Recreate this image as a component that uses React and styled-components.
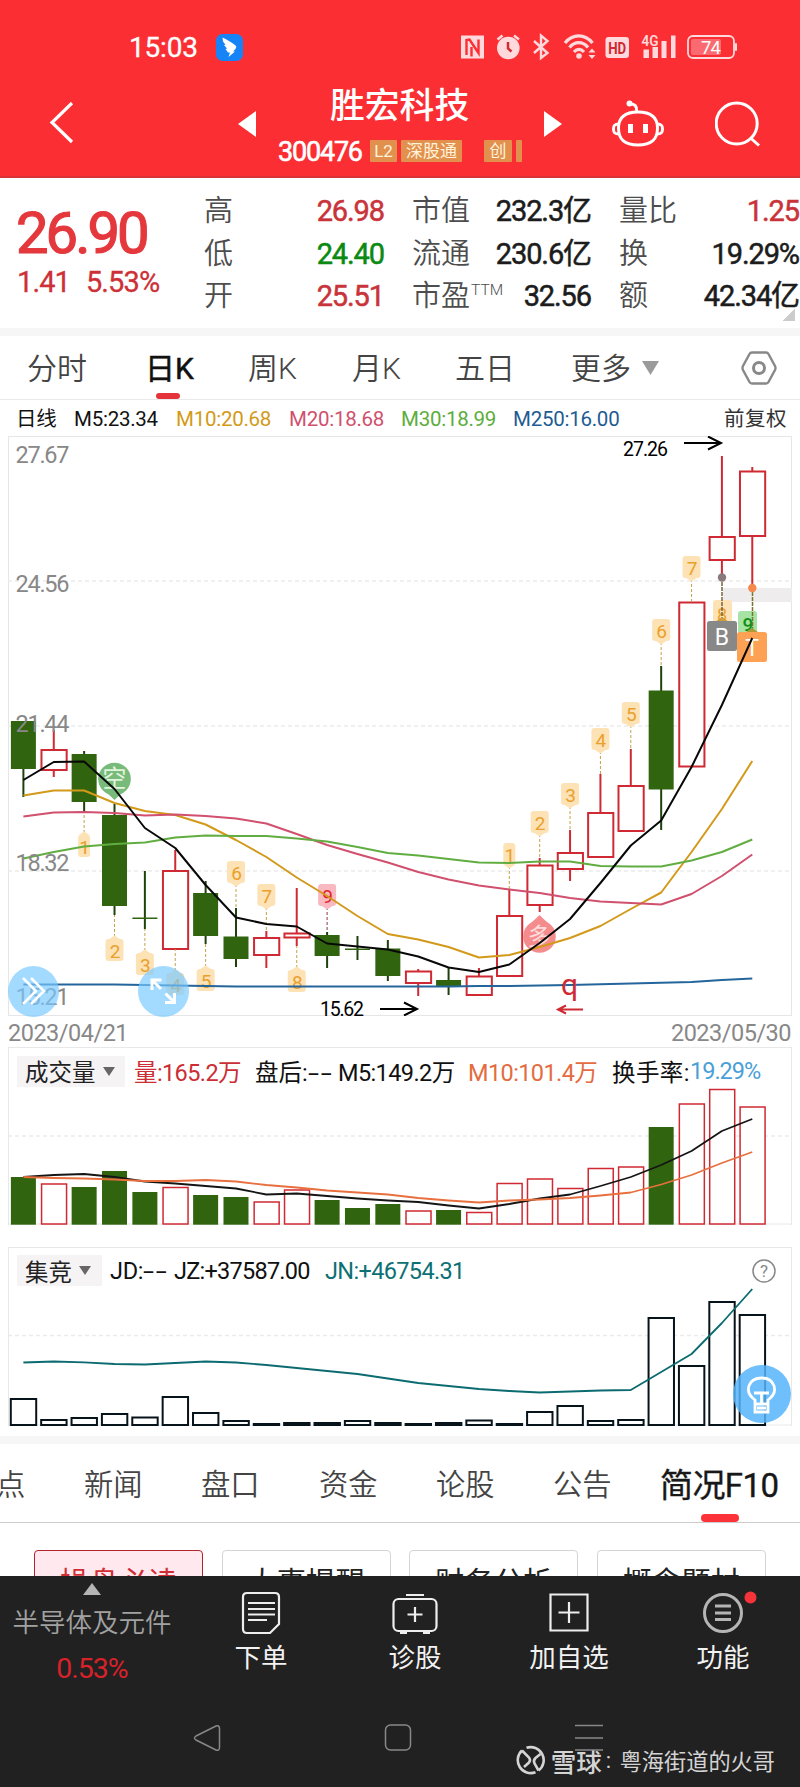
import React from 'react';
import styled, { createGlobalStyle } from 'styled-components';

const GlobalStyle = createGlobalStyle`
  * { box-sizing: border-box; }
  body {
    margin: 0;
    background: #fff;
    font-family: Roboto, "Noto Sans CJK SC", sans-serif;
  }
  svg { display: block; }
`;

/* styled components start */

const Page = styled.div`
  display: flex;
  flex-direction: column;
  width: 800px;
  height: 1787px;
  overflow: hidden;
  background: #fff;
  white-space: nowrap;
`;

const Header = styled.header`
  height: 178px;
  background: #fb2e34;
  border-bottom: 2px solid #d93338;
  color: #fff;
`;

const StatusBar = styled.div`
  display: flex;
  align-items: center;
  justify-content: space-between;
  height: 94px;
  padding: 0 62px 0 129px;
`;

const Clock = styled.div`
  display: flex;
  align-items: center;
  gap: 18px;
  font-size: 28px;
  letter-spacing: -0.2px;
  -webkit-text-stroke: 0.3px #fff;
`;

const TitleBar = styled.div`
  display: grid;
  grid-template-columns: 238px 40px 266px 68px 103px 60px;
  height: 82px;
`;

const TitleIcon = styled.div`
  padding: ${props => props.pad};
`;

const Title = styled.div`
  display: flex;
  flex-direction: column;
`;

const StockName = styled.div`
  height: 42px;
  padding-left: 52px;
  font-size: 34.8px;
  line-height: 25px;
  font-weight: 500;
`;

const CodeRow = styled.div`
  display: flex;
  height: 24px;
  margin-top: 3px;
`;

const Code = styled.span`
  width: 92px;
  font-size: 27px;
  line-height: 27px;
  letter-spacing: -1.2px;
  -webkit-text-stroke: 0.6px #fff;
`;

const Badge = styled.span`
  width: ${props => props.w}px;
  height: 22px;
  margin: 1px ${props => props.gap}px 0 0;
  background: #e2904d;
  border-radius: 1px;
  color: #fff3dc;
  font-size: 17px;
  line-height: 23px;
  text-align: center;
`;

const Quote = styled.section`
  display: flex;
  height: 150px;
  color: #222;
`;

const PriceBox = styled.div`
  width: 205px;
  padding: 22px 0 0 16px;
  color: #e4383d;
`;

const Price = styled.div`
  font-size: 58px;
  line-height: 67px;
  letter-spacing: -3px;
  -webkit-text-stroke: 1.2px #e4383d;
`;

const Change = styled.div`
  display: flex;
  gap: 16px;
  padding-left: 1px;
  font-size: 29px;
  line-height: 33px;
  margin-top: -1px;
  letter-spacing: -0.9px;
  color: #cd3036;
  -webkit-text-stroke: 0.3px #cd3036;
`;

const Stats = styled.div`
  display: grid;
  grid-template-columns: 180px 179px 180px;
  grid-template-rows: repeat(3, 42.5px);
  column-gap: 28px;
  padding-top: 12px;
`;

const Stat = styled.div`
  display: flex;
  justify-content: space-between;
  line-height: 43px;
`;

const StatLabel = styled.span`
  margin-left: -1px;
  font-size: 29px;
  font-weight: 350;
  color: #4d4d4d;

  sup {
    font-size: 15.5px;
    vertical-align: 11px;
    line-height: 0;
    margin-left: 1px;
  }
`;

const StatValue = styled.span`
  font-size: 29px;
  letter-spacing: -1.1px;
  margin-right: 1px;
  color: ${props => props.color || '#1c1c1c'};
  -webkit-text-stroke: 0.5px ${props => props.color || '#1c1c1c'};
`;

const CornerMark = styled.div`
  flex: none;
  width: 13px;
  height: 12px;
  margin: 131px 0 0 -18px;
  background: linear-gradient(to bottom right, transparent 50%, #ccc 50%);
`;

const Divider = styled.div`
  height: 8px;
  background: #f6f6f6;
`;

const PeriodTabs = styled.nav`
  display: grid;
  grid-template-columns: 118px 103px 104px 103px 116px 70px 99px 60px;
  height: 64px;
  padding-left: 27px;
  border-bottom: 1px solid #e9e9e9;
`;

const PeriodTab = styled.div`
  display: flex;
  flex-direction: column;
  justify-content: space-between;
  font-size: 30px;
  line-height: 65px;
  height: 63px;
  font-weight: ${props => (props.active ? 400 : 350)};
  color: ${props => (props.active ? '#111' : '#444')};
  -webkit-text-stroke: ${props => (props.active ? '0.5px #111' : '0')};

  &::after {
    content: '';
    flex: none;
    display: ${props => (props.active ? 'block' : 'none')};
    width: 24px;
    height: 6px;
    margin: -8px 0 0 11px;
    border-radius: 3px;
    background: #e4333a;
  }
`;

const Averages = styled.div`
  display: grid;
  grid-template-columns: 58px 102px 113px 112px 112px 211px 70px;
  height: 36px;
  padding-left: 16px;
  font-size: 20.5px;
  line-height: 38px;
  letter-spacing: -0.25px;
`;

const Tint = styled.span`
  color: ${props => props.color || '#111'};
  letter-spacing: ${props => props.ls}px;
`;

/* double hyphen shown for an empty value */
const Dashes = styled.span`
  display: inline-block;
  letter-spacing: 1px;
  transform: scaleX(1.7);
  transform-origin: left;
`;

const ChartArea = styled.div`
  position: relative;
  height: 580px;
`;

const FloatButton = styled.div`
  position: absolute;
  left: ${props => props.x}px;
  top: ${props => props.y}px;
  width: ${props => props.size}px;
  height: ${props => props.size}px;
  border-radius: 50%;
  background: ${props => props.bg};
`;

const Dates = styled.div`
  display: flex;
  justify-content: space-between;
  height: 31px;
  padding: 0 9px 0 8px;
  font-size: 23.5px;
  line-height: 34px;
  letter-spacing: -0.5px;
  color: #888;
`;

const Panel = styled.section`
  position: relative;
  height: ${props => props.h}px;
  margin: 0 8px ${props => props.gap}px;
  border: 1px solid #e8e8e8;
  border-width: 1px 1px 0 1px;
`;

const PanelHead = styled.div`
  display: grid;
  grid-template-columns: ${props => props.cols};
  align-items: center;
  height: 39px;
  padding: 6px 0 0 8px;
  font-size: 23.5px;
`;

const Picker = styled.div`
  display: flex;
  align-items: center;
  gap: 7px;
  width: ${props => props.w}px;
  height: 31px;
  padding-left: 8px;
  background: #f6f3f5;
  color: #222;

  &::after {
    content: '';
    border: 6.5px solid transparent;
    border-top: 9px solid #666;
    border-bottom: 0;
  }
`;

const NewsTabs = styled.nav`
  display: grid;
  grid-template-columns: 88px 117px 118px 117px 117px 107px 130px;
  height: 79px;
  margin-left: -4px;
  border-bottom: 1px solid #ccc;
`;

const NewsTab = styled.div`
  font-size: ${props => (props.active ? 33 : 29.3)}px;
  font-weight: ${props => (props.active ? 400 : 350)};
  color: ${props => (props.active ? '#181818' : '#444')};
  line-height: 83px;
  letter-spacing: ${props => (props.active ? -0.6 : 0)}px;
  -webkit-text-stroke: ${props => (props.active ? '0.4px #181818' : '0')};

  &::after {
    content: '';
    display: ${props => (props.active ? 'block' : 'none')};
    width: 38px;
    height: 8px;
    margin: -13px 0 0 41px;
    border-radius: 4px;
    background: #fb3338;
  }
`;

const Topics = styled.div`
  display: grid;
  grid-template-columns: repeat(4, 169px);
  gap: 18.6px;
  height: 53px;
  padding: 27px 0 0 34px;
  overflow: hidden;
`;

const Topic = styled.div`
  height: 66px;
  border: 1.5px solid ${props => (props.active ? '#b3232b' : '#d4d4d4')};
  border-radius: 4px;
  background: ${props => (props.active ? '#ffe9ee' : '#fff')};
  color: ${props => (props.active ? '#d22d35' : '#222')};
  font-size: 29.3px;
  line-height: 65px;
  text-align: center;
`;

const BottomBar = styled.footer`
  position: relative;
  height: 211px;
  background: #212121;
  color: #f2f2f2;
`;

const Actions = styled.div`
  display: grid;
  grid-template-columns: 184px repeat(4, 154px);
  height: 120px;
`;

const Sector = styled.div`
  display: flex;
  flex-direction: column;
  align-items: center;
  padding-top: 7px;
  font-size: 26.5px;
  font-weight: 350;
  line-height: 36px;
  color: #a2a2a2;

  &::before {
    content: '';
    border: 9.5px solid transparent;
    border-bottom: 12px solid #b5b5b5;
    border-top: 0;
    margin-bottom: 10px;
  }
`;

const SectorChange = styled.div`
  margin-top: 10px;
  font-size: 28.5px;
  font-weight: 400;
  letter-spacing: -1px;
  color: #d8222a;
`;

const Action = styled.div`
  display: flex;
  flex-direction: column;
  align-items: center;
  padding-top: 13px;
  font-size: 26.5px;
  line-height: 46px;
`;

const SystemNav = styled.div`
  display: flex;
  padding: 28px 0 0 193px;
  gap: 163px;
`;

const Watermark = styled.div`
  position: absolute;
  right: 25px;
  top: 168px;
  display: flex;
  align-items: center;
  height: 32px;
  color: #d4d4d4;
  font-size: 22.2px;
`;

const Brand = styled.span`
  margin: 0 0 0 5px;
  font-size: 25.5px;
  font-weight: 500;
`;

const Colon = styled.span`
  width: 18px;
  padding-left: 4px;
`;

/* styled components end */

/* chart data, one entry for each trading day, y in page pixels */

const RED = '#cf2a33';
const GREEN = '#30640f';
const dayX = i => 23.4 + i * 30.37;

// [up, top, bottom, wick top, wick bottom]
const candles = [
  [0, 721, 769, 721, 797], [1, 750, 770, 730, 777], [0, 754, 802, 751, 812],
  [0, 815, 906, 804, 915], [0, 917.5, 919, 871, 929], [1, 871, 949, 850, 949],
  [0, 893, 936, 881, 944], [0, 936.5, 959, 908, 967], [1, 938, 955, 931, 968],
  [1, 933.5, 937.5, 888, 946], [0, 935, 956, 932, 968], [0, 948.5, 950, 936, 960],
  [0, 948.5, 976, 940, 981], [1, 971.5, 983, 969, 996], [0, 980, 986, 967, 995],
  [1, 976.5, 995, 968, 995], [1, 916, 976, 890, 976], [1, 865.5, 905, 858, 912],
  [1, 853, 869, 830, 881], [1, 813, 857, 774, 857], [1, 786, 831, 749, 831],
  [0, 690.5, 789.5, 666, 830], [1, 602.5, 766.5, 602, 766], [1, 537, 560, 456, 577],
  [1, 471.5, 536, 467, 588],
];

const averages = [
  { color: '#d3991a', ys: [795.5, 790.5, 790.5, 803, 811, 815, 824.5, 840, 857, 877.5, 896, 916, 934, 939.5, 947, 957.5, 955, 947, 938, 926, 909, 892.5, 852, 809, 761] },
  { color: '#d0506e', ys: [816.5, 812.5, 812, 813, 815.5, 814.5, 816, 818.5, 823.5, 834, 845, 854, 862.5, 872, 879.5, 885.5, 889.5, 893, 898, 901.5, 903, 904.5, 894, 876, 854.5] },
  { color: '#61ad42', ys: [858.5, 852, 846.5, 844, 842.5, 837.5, 835.5, 836, 836, 838.5, 841.5, 847, 853, 855.5, 859, 862.5, 863, 861.5, 861.5, 866, 866.5, 866.5, 860.5, 852, 839.5] },
  { color: '#24659b', ys: [984.5, 984.5, 984.5, 984.5, 985, 985.5, 986, 986.5, 986.5, 986.5, 986.5, 986.5, 986.5, 986.5, 986.5, 986, 986, 985.5, 985, 984.3, 983.5, 982.8, 982, 980, 978.5] },
  { color: '#080808', ys: [780, 762, 761.5, 789, 828, 848, 885, 917.5, 924, 926.5, 943.5, 946.5, 949.5, 956.5, 967.5, 972, 964.5, 943, 919, 883, 845.5, 820.5, 767, 705, 638] },
];

// [day, digit, tag top, far end of the dotted line]
const marks = [
  [2, 1, 833, 812], [3, 2, 937, 915], [4, 3, 951, 929], [5, 4, 971, 949],
  [6, 5, 967, 944], [7, 6, 861, 908], [8, 7, 884, 931], [9, 8, 968, 946],
  [10, 9, 884, 932], [16, 1, 843, 890], [17, 2, 811, 858], [18, 3, 783, 830],
  [19, 4, 728, 774], [20, 5, 702, 749], [21, 6, 619, 666], [22, 7, 556, 602],
];

const volumes = [
  [0, 1177], [1, 1184], [0, 1187], [0, 1171], [0, 1192], [1, 1187.5], [0, 1195],
  [0, 1197], [1, 1202], [1, 1190], [0, 1200], [0, 1208], [0, 1204], [1, 1211],
  [0, 1210], [1, 1212.5], [1, 1183.5], [1, 1179], [1, 1188.5], [1, 1168.5],
  [1, 1167], [0, 1127], [1, 1104], [1, 1089.5], [1, 1107],
];
const volumeM5 = [1177, 1175, 1174, 1177, 1181.5, 1183.5, 1186, 1188.5, 1194.5, 1193.5, 1196, 1198.5, 1200.5, 1202, 1205.5, 1208.5, 1204, 1198.5, 1194.5, 1186, 1177, 1165, 1151, 1131, 1119];
const volumeM10 = [1177, 1178, 1178.5, 1179.5, 1181, 1181, 1180, 1181.5, 1185, 1187.5, 1190.5, 1192.5, 1194.5, 1198, 1200.5, 1202.5, 1200.5, 1199.5, 1198, 1195.5, 1192.5, 1184.5, 1175, 1163, 1152];

const auctions = [1399, 1420, 1418, 1414, 1417.5, 1397, 1413, 1421, 1424, 1423, 1423, 1421, 1423, 1424, 1423, 1420.5, 1424, 1412, 1406, 1421, 1420, 1318, 1366, 1302, 1315];
const auctionLine = [1362.5, 1361.5, 1362.3, 1364, 1364.5, 1363, 1361.5, 1362.5, 1365, 1368, 1371, 1374, 1378.5, 1383, 1386, 1389, 1391, 1392.5, 1391.5, 1390.5, 1390, 1372, 1354, 1323, 1289];

const Line = ({ ys, color, width = 2 }) => (
  <polyline
    points={ys.map((y, i) => `${dayX(i)},${y}`).join(' ')}
    fill="none" stroke={color} strokeWidth={width} strokeLinejoin="round" />
);

const Grid = ({ ys }) => ys.map(y => (
  <line key={y} x1="8" x2="792" y1={y} y2={y} stroke="#ebebeb" strokeWidth="1.5" strokeDasharray="4 3" />
));

const Candle = ({ day, up, top, bottom, high, low }) => {
  const x = dayX(day);
  const stroke = up ? RED : '#1d420c';
  return (
    <g>
      <line x1={x} x2={x} y1={high} y2={low} stroke={stroke} strokeWidth="2" />
      {up
        ? <rect x={x - 12.3} y={top} width="25.2" height={bottom - top} fill="#fff" stroke={RED} strokeWidth="2" />
        : <rect x={x - 12.5} y={top} width="25" height={bottom - top} fill={GREEN} />}
    </g>
  );
};

const Mark = ({ day, digit, top, far }) => {
  const x = dayX(day);
  const below = far < top;
  const nine = digit === 9;
  const w = digit === 1 ? 6 : 9;
  return (
    <g>
      <line x1={x} x2={x} y1={below ? top : top + 23} y2={far} stroke={nine ? '#8b3a44' : '#c4a24a'} strokeDasharray="3 2" />
      <rect x={x - w} y={top + (below ? 2 : 0)} width={w * 2} height="22" rx="3" fill={nine ? '#f9b9c0' : '#fde2b6'} />
      <path
        d={below ? `M${x - 6} ${top + 2.5}L${x} ${top - 1.5}L${x + 6} ${top + 2.5}Z` : `M${x - 6} ${top + 21.5}L${x} ${top + 25.5}L${x + 6} ${top + 21.5}Z`}
        fill={nine ? '#f9b9c0' : '#fde2b6'} />
      <text x={x + 0.5} y={top + (below ? 21 : 19)} textAnchor="middle" fontSize="19" fill={nine ? '#e0202c' : '#eaa02c'}>{digit}</text>
    </g>
  );
};

const AxisLabel = ({ y, children }) => (
  <text x="15.5" y={y} fontSize="23.5" fill="#888" textLength="54">{children}</text>
);

const Arrow = ({ from, to, y, color = '#000', head = 13 }) => {
  const d = to > from ? -head : head;
  return (
    <path d={`M${from} ${y}H${to}M${to + d} ${y - head / 2}L${to} ${y}L${to + d} ${y + head / 2}`} fill="none" stroke={color} strokeWidth="2" />
  );
};

const PriceChart = () => (
  <svg width="800" height="580" viewBox="0 436 800 580">
    <rect x="8.5" y="436.5" width="783" height="579" fill="none" stroke="#e6e6e6" />
    <Grid ys={[581, 726, 871]} />
    <rect x="723" y="588" width="69" height="14" fill="#efecee" />
    {candles.map(([up, top, bottom, high, low], i) => (
      <Candle key={i} day={i} up={up} top={top} bottom={bottom} high={high} low={low} />
    ))}
    {marks.map(([day, digit, top, far]) => (
      <Mark key={day} day={day} digit={digit} top={top} far={far} />
    ))}

    {/* buy and trade flags on the last two days */}
    <rect x="713" y="600" width="19" height="24" rx="3" fill="#fde2b6" />
    <text x="722" y="621" textAnchor="middle" fontSize="18" fill="#eaa02c">8</text>
    <path d="M722 582V620" stroke="#77663c" strokeWidth="1.5" strokeDasharray="4 1" />
    <path d="M715 622L722 617L729 622Z" fill="#d09b39" />
    <circle cx="722" cy="577.5" r="4.2" fill="#8a7a7c" />
    <rect x="738" y="611" width="19" height="23" rx="3" fill="#a6e3a4" />
    <text x="748" y="631" textAnchor="middle" fontSize="19" fontWeight="500" fill="#109016">9</text>
    <path d="M752.5 592V630" stroke="#77762c" strokeWidth="1.5" strokeDasharray="4 1" />
    <path d="M746 632L752 628L758 632Z" fill="#b09a33" />
    <circle cx="752.3" cy="588" r="4.2" fill="#f5894c" />
    <rect x="707" y="621" width="30" height="30" rx="2.5" fill="#888" />
    <text x="722" y="645" textAnchor="middle" fontSize="23" fill="#fff">B</text>
    <rect x="737" y="632" width="30" height="30" rx="2.5" fill="#fda254" />
    <text x="752" y="656" textAnchor="middle" fontSize="23" fill="#fff">T</text>

    <path d="M104 790L114.5 800L125 790Z" fill="#77ba79" />
    <circle cx="114.5" cy="779" r="16.3" fill="#77ba79" />
    <text x="114.5" y="787" textAnchor="middle" fontSize="24" fill="#e0f4dd">空</text>
    <path d="M529 925L539.5 915L550 925Z" fill="#f48c8e" />
    <circle cx="539.5" cy="936.5" r="16.3" fill="#f48c8e" />
    <text x="539.5" y="945" textAnchor="middle" fontSize="24" fill="#ffdcda">多</text>

    {averages.map(line => <Line key={line.color} {...line} />)}

    <AxisLabel y={463}>27.67</AxisLabel>
    <AxisLabel y={592}>24.56</AxisLabel>
    <AxisLabel y={731.5}>21.44</AxisLabel>
    <AxisLabel y={871}>18.32</AxisLabel>
    <AxisLabel y={1005}>15.21</AxisLabel>

    <text x="623" y="456" fontSize="19.5" textLength="45">27.26</text>
    <Arrow from={684} to={721} y={443} />
    <text x="320" y="1016" fontSize="19.5" textLength="44">15.62</text>
    <Arrow from={380} to={417} y={1009} />
    <text x="569.5" y="995" textAnchor="middle" fontSize="30" fill={RED}>q</text>
    <Arrow from={583} to={558} y={1009.5} color={RED} head={8} />
  </svg>
);

const VolumeChart = () => (
  <svg width="782" height="138" viewBox="9 1087 782 138">
    <Grid ys={[1136]} />
    <path d="M9 1224H791" stroke="#e8e8e8" />
    {volumes.map(([up, top], i) => (up
      ? <rect key={i} x={dayX(i) - 12.2} y={top} width="25" height={1224 - top} fill="#fff" stroke={RED} strokeWidth="1.5" />
      : <rect key={i} x={dayX(i) - 12.5} y={top} width="25" height={1224.7 - top} fill={GREEN} />
    ))}
    <Line ys={volumeM5} color="#151515" width={1.8} />
    <Line ys={volumeM10} color="#e86f3e" width={1.8} />
  </svg>
);

const AuctionChart = () => (
  <svg width="782" height="139" viewBox="9 1287 782 139">
    <Grid ys={[1335.5]} />
    <path d="M9 1425H791" stroke="#e8e8e8" />
    {auctions.map((top, i) => (
      <rect key={i} x={dayX(i) - 12.6} y={top} width="25.4" height={1425 - top} fill="#fff" stroke="#07131a" strokeWidth="2" />
    ))}
    <Line ys={auctionLine} color="#0b6b70" width={1.8} />
  </svg>
);

const StatusIcons = () => (
  <svg width="277" height="30" viewBox="461 32 277 30" fill="#ffd9dc">
    {/* nfc */}
    <path d="M461 35.5H484V58.5H461Z" />
    <path d="M466.5 55V40L469.5 39.5L478.5 53V39.5M466.5 40V55M471.5 47V56.5" fill="none" stroke="#fb2e34" strokeWidth="2.4" />
    {/* alarm */}
    <circle cx="508.3" cy="48" r="11.3" />
    <path d="M497.5 39.5L502.5 35.5M519 39.5L514 35.5" stroke="#ffd9dc" strokeWidth="2.6" />
    <path d="M508 42V48.5L511.5 51.5" fill="none" stroke="#d22c33" strokeWidth="2.5" />
    {/* bluetooth */}
    <path d="M534 41L547.5 53L541 58V35.5L547.5 41L534 53" fill="none" stroke="#ffd9dc" strokeWidth="2.4" />
    {/* wifi */}
    <path d="M565 43C572.5 33.5 585 33.5 592.5 43M569.5 47.5C574.5 41 583 41 588 47.5M574 52C577 48.5 581 48.5 584 52" fill="none" stroke="#ffd9dc" strokeWidth="3.2" />
    <circle cx="579" cy="56" r="2.8" />
    <path d="M588.5 52.5L592 48.5L595.5 52.5ZM588.5 55L592 59L595.5 55Z" />
    {/* hd */}
    <rect x="605.5" y="37" width="23.5" height="21" rx="3" />
    <text x="617.2" y="54" textAnchor="middle" fontSize="17" fontWeight="700" fill="#c92c33" textLength="18" lengthAdjust="spacingAndGlyphs">HD</text>
    {/* signal */}
    <text x="641.5" y="45.5" fontSize="15" fontWeight="600" textLength="17" lengthAdjust="spacingAndGlyphs">4G</text>
    <path d="M643.5 49.5H649V58H643.5ZM652.5 47H658V58H652.5ZM661.5 41H666.5V58H661.5ZM671 35.5H675.5V58H671Z" />
    {/* battery */}
    <rect x="688" y="36" width="46" height="22" rx="5" fill="none" stroke="#ffd9dc" strokeWidth="1.8" />
    <rect x="691" y="39" width="30" height="16" rx="2" fill="#fb6a70" />
    <rect x="735" y="43" width="2" height="8" rx="1" />
    <text x="711" y="53.5" textAnchor="middle" fontSize="18.5" fill="#fff" textLength="20">74</text>
  </svg>
);

const stats = [
  ['高', '26.98', '#c9333a'], ['市值', '232.3亿'], ['量比', '1.25', '#c9333a'],
  ['低', '24.40', '#0a8a12'], ['流通', '230.6亿'], ['换', '19.29%'],
  ['开', '25.51', '#c9333a'], ['市盈', '32.56'], ['额', '42.34亿'],
];

const App = () => {
  return (
    <Page>
      <GlobalStyle />

      <Header>
        <StatusBar>
          <Clock>
            15:03
            <svg width="27" height="27" viewBox="0 0 27 27">
              <rect width="27" height="27" rx="6.5" fill="#1684f6" />
              <path d="M6.5 3.5C11 6 16 8 19.5 11.5C21 13 20 14 19 15.5L17 17.5H19L12.5 23L14 18.5H12L9.5 15L11 14.5L8 11L9.5 10.7L7 7.5Z" fill="#fff" />
            </svg>
          </Clock>
          <StatusIcons />
        </StatusBar>
        <TitleBar>
          <TitleIcon pad="8px 0 0 49px">
            <svg width="26" height="42" viewBox="0 0 26 42" fill="none" stroke="#fff" strokeWidth="3.2"><path d="M23 1L3 20.5L23 40" /></svg>
          </TitleIcon>
          <TitleIcon pad="17px 0 0 0">
            <svg width="18" height="26" viewBox="0 0 18 26" fill="#fff"><path d="M18 0V26L0 13Z" /></svg>
          </TitleIcon>
          <Title>
            <StockName>胜宏科技</StockName>
            <CodeRow>
              <Code>300476</Code>
              <Badge w={27} gap={4}>L2</Badge>
              <Badge w={61} gap={22}>深股通</Badge>
              <Badge w={28} gap={4}>创</Badge>
              <Badge w={6} gap={0} />
            </CodeRow>
          </Title>
          <TitleIcon pad="17px 0 0 0">
            <svg width="18" height="26" viewBox="0 0 18 26" fill="#fff"><path d="M0 0V26L18 13Z" /></svg>
          </TitleIcon>
          <TitleIcon pad="6px 0 0 0">
            <svg width="52" height="48" viewBox="0 0 52 48" fill="none" stroke="#fff" strokeWidth="3">
              <path d="M26 12C38 12 45.5 17 45.5 28C45.5 40 39 45 26 45C13 45 6.5 40 6.5 28C6.5 17 14 12 26 12Z" />
              <path d="M6.5 24C2 24 1.5 26 1.5 29C1.5 32 2 34 7 34M45.5 24C50 24 50.5 26 50.5 29C50.5 32 50 34 45 34" />
              <path d="M24.5 11C25 6 23 4 18 4" />
              <circle cx="17.5" cy="3.5" r="3" fill="#fff" stroke="none" />
              <path d="M18.5 24V33M33.5 24V33" strokeWidth="5" />
            </svg>
          </TitleIcon>
          <TitleIcon pad="7px 0 0 0">
            <svg width="46" height="46" viewBox="0 0 46 46" fill="none" stroke="#fff" strokeWidth="3">
              <circle cx="21.7" cy="22.5" r="20.5" />
              <path d="M35 36.5L44 44.5" />
            </svg>
          </TitleIcon>
        </TitleBar>
      </Header>

      <Quote>
        <PriceBox>
          <Price>26.90</Price>
          <Change><span>1.41</span><span>5.53%</span></Change>
        </PriceBox>
        <Stats>
          {stats.map(([label, value, color]) => (
            <Stat key={label}>
              <StatLabel>{label}{label === '市盈' && <sup>TTM</sup>}</StatLabel>
              <StatValue color={color}>{value}</StatValue>
            </Stat>
          ))}
        </Stats>
        <CornerMark />
      </Quote>
      <Divider />

      <PeriodTabs>
        <PeriodTab>分时</PeriodTab>
        <PeriodTab active>日K</PeriodTab>
        <PeriodTab>周K</PeriodTab>
        <PeriodTab>月K</PeriodTab>
        <PeriodTab>五日</PeriodTab>
        <PeriodTab>更多</PeriodTab>
        <TitleIcon pad="25px 0 0 1px">
          <svg width="17" height="14" viewBox="0 0 17 14" fill="#9b9b9b"><path d="M0 0H17L8.5 14Z" /></svg>
        </TitleIcon>
        <TitleIcon pad="15px 0 0 1px">
          <svg width="36" height="34" viewBox="0 0 36 34" fill="none" stroke="#888" strokeWidth="2.4">
            <path d="M11 1.5H25C26 1.5 27 2 27.5 3L34 15Q35 17 34 19L27.5 31C27 32 26 32.5 25 32.5H11C10 32.5 9 32 8.5 31L2 19Q1 17 2 15L8.5 3C9 2 10 1.5 11 1.5Z" />
            <circle cx="18" cy="17" r="5.5" strokeWidth="3" />
          </svg>
        </TitleIcon>
      </PeriodTabs>

      <Averages>
        <Tint>日线</Tint>
        <Tint>M5:23.34</Tint>
        <Tint color="#d29a17">M10:20.68</Tint>
        <Tint color="#d0506e">M20:18.68</Tint>
        <Tint color="#5cad3c">M30:18.99</Tint>
        <Tint color="#1d5c93">M250:16.00</Tint>
        <Tint color="#333" ls={0.5}>前复权</Tint>
      </Averages>

      <ChartArea>
        <PriceChart />
        <FloatButton x={8} y={530} size={51} bg="rgba(120, 200, 255, 0.68)">
          <svg width="51" height="51" viewBox="0 0 51 51" fill="none" stroke="#fff" strokeWidth="2.5">
            <path d="M15 12L28 25L15 38M23 12L36 25L23 38" />
          </svg>
        </FloatButton>
        <FloatButton x={138} y={530} size={51} bg="rgba(120, 200, 255, 0.68)">
          <svg width="51" height="51" viewBox="0 0 51 51" fill="none" stroke="#fff" strokeWidth="3">
            <path d="M23.5 14H14V24M14 14L23 23M27 36.5H36.5V27M36.5 36.5L27.5 27.5" />
          </svg>
        </FloatButton>
      </ChartArea>
      <Dates><span>2023/04/21</span><span>2023/05/30</span></Dates>

      <Panel h={178} gap={22}>
        <PanelHead cols="117px 121px 83px 130px 144px 78px 80px">
          <Picker w={108}>成交量</Picker>
          <Tint color="#cb2e35" ls={-0.6}>量:165.2万</Tint>
          <Tint>盘后:<Dashes>--</Dashes></Tint>
          <Tint ls={-0.6}>M5:149.2万</Tint>
          <Tint color="#e46c40" ls={-0.6}>M10:101.4万</Tint>
          <Tint ls={0.4}>换手率:</Tint>
          <Tint color="#4a9fd8" ls={-1}>19.29%</Tint>
        </PanelHead>
        <VolumeChart />
      </Panel>

      <Panel h={179} gap={10}>
        <PanelHead cols="93px 64px 151px 427px 30px">
          <Picker w={85}>集竞</Picker>
          <Tint ls={-0.3}>JD:<Dashes>--</Dashes></Tint>
          <Tint ls={-0.75}>JZ:+37587.00</Tint>
          <Tint color="#0d7074" ls={-0.65}>JN:+46754.31</Tint>
          <svg width="24" height="24" viewBox="0 0 24 24">
            <circle cx="12" cy="12" r="11" fill="none" stroke="#888" strokeWidth="1.5" />
            <text x="12" y="18" textAnchor="middle" fontSize="17" fill="#888">?</text>
          </svg>
        </PanelHead>
        <AuctionChart />
        <FloatButton x={724} y={117} size={58} bg="rgba(85, 180, 250, 0.85)">
          <svg width="58" height="58" viewBox="0 0 58 58" fill="none" stroke="#fff" strokeWidth="2.8">
            <path d="M22 38V35C10 26 16 13 28.5 13C41 13 47 26 35 35V38M22 39H35V47H22ZM21 28H36M28.5 28V38M24 43H33" />
          </svg>
        </FloatButton>
      </Panel>
      <Divider />

      <NewsTabs>
        <NewsTab>点</NewsTab>
        <NewsTab>新闻</NewsTab>
        <NewsTab>盘口</NewsTab>
        <NewsTab>资金</NewsTab>
        <NewsTab>论股</NewsTab>
        <NewsTab>公告</NewsTab>
        <NewsTab active>简况F10</NewsTab>
      </NewsTabs>
      <Topics>
        <Topic active>操盘必读</Topic>
        <Topic>大事提醒</Topic>
        <Topic>财务分析</Topic>
        <Topic>概念题材</Topic>
      </Topics>

      <BottomBar>
        <Actions>
          <Sector>
            半导体及元件
            <SectorChange>0.53%</SectorChange>
          </Sector>
          <Action>
            <svg width="46" height="46" viewBox="0 0 46 46" fill="none" stroke="#eee" strokeWidth="2.2">
              <path d="M9 4H37Q41 4 41 8V35L32 44H9Q5 44 5 40V8Q5 4 9 4ZM10 14H37M10 20H37M10 25.5H37M10 31H29" />
            </svg>
            下单
          </Action>
          <Action>
            <svg width="46" height="46" viewBox="0 0 46 46" fill="none" stroke="#eee" strokeWidth="2.2">
              <rect x="1.5" y="10" width="43" height="32" rx="5" />
              <path d="M14 6H32M8 44H15M31 44H38M23 18V33M15.5 25.5H30.5" />
            </svg>
            诊股
          </Action>
          <Action>
            <svg width="46" height="46" viewBox="0 0 46 46" fill="none" stroke="#eee" strokeWidth="2.2">
              <path d="M4.5 5.5H41.5V41.5H4.5ZM23 13V34M12.5 23.5H33.5" />
            </svg>
            加自选
          </Action>
          <Action>
            <svg width="70" height="46" viewBox="0 0 70 46" fill="none" stroke="#b5b5b5" strokeWidth="3">
              <circle cx="35" cy="24" r="18.5" />
              <path d="M27 17H43M27 24H43M27 30.5H43" />
              <circle cx="62.5" cy="8.5" r="6" fill="#f5333a" stroke="none" />
            </svg>
            功能
          </Action>
        </Actions>
        <SystemNav>
          <svg width="28" height="28" viewBox="0 0 28 28" fill="none" stroke="#888" strokeWidth="1.5">
            <path d="M3 12L23 2Q26 1 26.5 4V24Q26 27 23 26L3 16Q0 14 3 12Z" />
          </svg>
          <svg width="28" height="28" viewBox="0 0 28 28" fill="none" stroke="#888" strokeWidth="1.5">
            <rect x="1.5" y="1" width="25" height="25" rx="5" />
          </svg>
          <svg width="28" height="28" viewBox="0 0 28 28" fill="none" stroke="#888" strokeWidth="1.5">
            <path d="M0 1.5H28M0 14H28M0 26H28" />
          </svg>
        </SystemNav>
        <Watermark>
          <svg width="30" height="30" viewBox="-1 -1 30 30" fill="none" stroke="#d4d4d4" strokeWidth="2.6">
            <path d="M9.5 1.8A13 13 0 0 1 21.5 24.5M18.5 26.2A13 13 0 0 1 5 4.5" />
            <path d="M5 4.5L12 11.5Q14 14 12 16.5L7 21M23.5 8L18.5 12Q16 14.5 17.5 17.5L21.5 24.5" />
          </svg>
          <Brand>雪球</Brand>
          <Colon>:</Colon>
          粤海街道的火哥
        </Watermark>
      </BottomBar>
    </Page>
  );
};

export default App;
